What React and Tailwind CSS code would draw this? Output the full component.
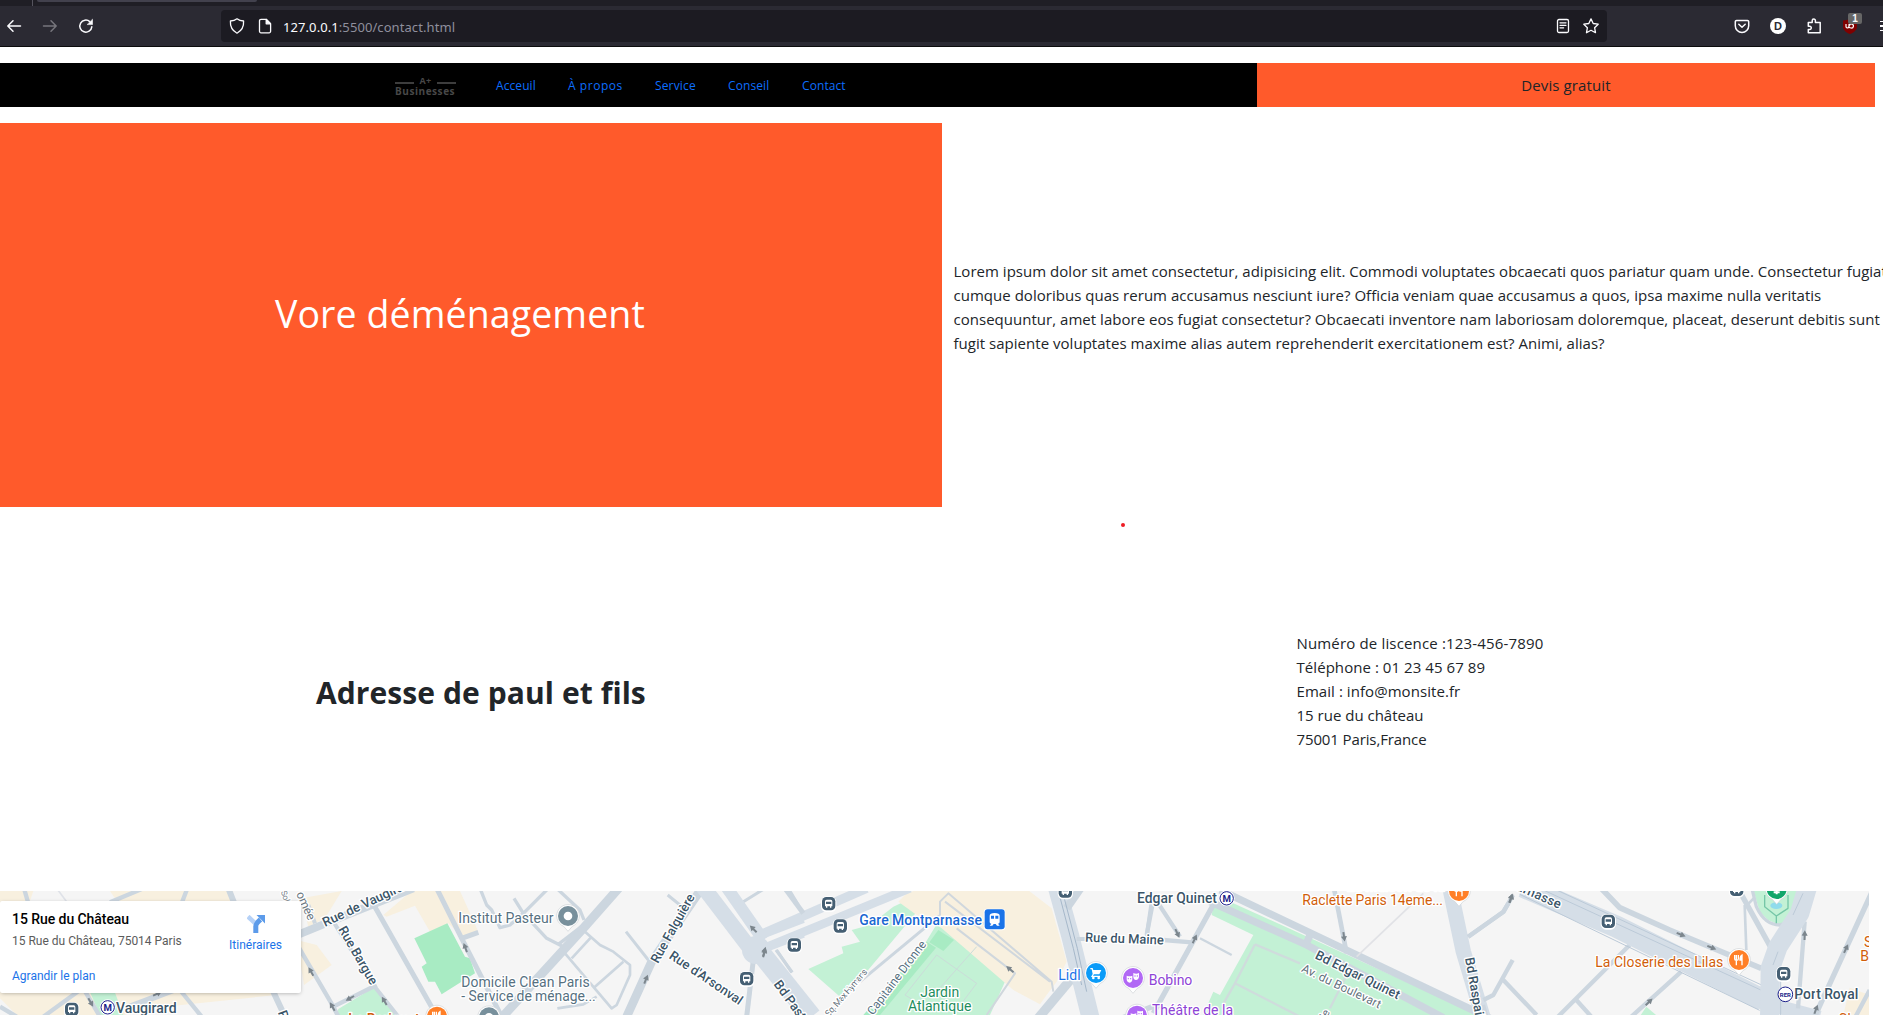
import React from "react";

const sans = "font-['Open_Sans','Noto_Sans',sans-serif]";

/* ---------- browser toolbar ---------- */

function Icon({ children, className = "" }) {
  return (
    <svg viewBox="0 0 16 16" className={`size-4 shrink-0 overflow-visible ${className}`} fill="none" stroke="currentColor" strokeWidth="1.3" strokeLinecap="round" strokeLinejoin="round">
      {children}
    </svg>
  );
}

function Toolbar() {
  return (
    <header className="h-[47px] border-b border-[#0c0c0d] bg-[#2b2a33] text-[#fbfbfe]">
      <div className="flex h-[6px] bg-[#1f1e25]">
        <div className="h-[6px] w-[33px] border-r border-[#55545e]" />
        <div className="ml-[4px] h-[2px] w-[220px] rounded-b bg-[#42414d]" />
      </div>
      <div className="flex h-10 items-center gap-5 pl-[6px]">
        <Icon><path strokeWidth="1.5" d="M14.5 8H1.8M7 2.8L1.8 8L7 13.2" /></Icon>
        <Icon className="text-[#77767d]"><path strokeWidth="1.5" d="M1.5 8h12.7M9 2.8L14.2 8L9 13.2" /></Icon>
        <Icon>
          <path strokeWidth="1.5" d="M13.8 8.8A6 6 0 1 1 11.8 3.6" />
          <path fill="currentColor" strokeWidth=".6" d="M14.5 1.6v5H9.5z" />
        </Icon>
        <div className="ml-[107px] flex h-8 w-[1386px] shrink-0 items-center rounded-[4px] bg-[#1c1b22] pl-2">
          <Icon><path d="M8 .8c2 1.6 4 2.1 6.6 2.2.3 4.8-1.6 9.5-6.6 12.2C3 12.5 1.1 7.8 1.4 3 4 2.9 6 2.4 8 .8z" /></Icon>
          <Icon className="ml-3">
            <path d="M4 1.300h5.200L13.600 5.700v7.600a1.500 1.500 0 0 1-1.500 1.500H4a1.500 1.500 0 0 1-1.500-1.500V2.800A1.500 1.500 0 0 1 4 1.300z" />
            <path fill="currentColor" d="M9.200 1.500v4.300h4.200z" />
          </Icon>
          <p className="ml-[10px] flex-1 whitespace-pre pt-[3px] font-['Noto_Sans',sans-serif] text-[13px] tracking-[0.08px] text-[#8f8f9d]">
            <span className="text-[#fbfbfe]">127.0.0.1</span>:5500/contact.html
          </p>
          <Icon>
            <rect x="2.500" y="1.500" width="11" height="13" rx="1.500" />
            <path d="M5 4.800h6M5 7.300h6M5 9.800h3.600" />
          </Icon>
          <Icon className="ml-3 mr-2"><path d="M8 .9l2.200 4.600 5 .7-3.600 3.500.9 5L8 12.300l-4.500 2.400.9-5L.8 6.200l5-.7z" /></Icon>
        </div>
        <Icon className="ml-[107px]">
          <path strokeWidth="1.500" d="M2.500 2.500h11a1.200 1.200 0 0 1 1.200 1.200v4A6.700 6.700 0 0 1 1.300 7.700v-4A1.200 1.200 0 0 1 2.500 2.500z" />
          <path strokeWidth="1.500" d="M4.800 6.200L8 9.200l3.200-3" />
        </Icon>
        <div className="flex size-4 shrink-0 items-center justify-center rounded-full bg-white font-['Liberation_Sans',sans-serif] text-[11px] font-bold leading-none text-[#2b2a33]">D</div>
        <Icon><path strokeWidth="1.500" d="M2.300 6.200V4.500h3.900V2.700a1.600 1.600 0 0 1 3.200 0v1.800h4.800v10.300H2.300v-3.200h1.400a1.500 1.500 0 0 0 1.500-1.700A1.500 1.500 0 0 0 3.700 8.200H2.300z" /></Icon>
        <div className="relative size-4 shrink-0">
          <svg viewBox="0 0 16 16" className="size-4">
            <path fill="#800000" d="M8 .5C10 2 12.500 2.300 15 2.500v6C15 12 12 14.500 8 16 4 14.500 1 12 1 8.500v-6C3.500 2.300 6 2 8 .5z" />
            <path fill="none" stroke="#fff" strokeWidth="1.200" d="M4 6v2.500q0 1.500 1.300 1.500T7 8.500V6M7 9q.8 1 2.200 1a2 2 0 1 0-1.700-2.500" />
          </svg>
          <span className="absolute -top-[5px] left-[6px] flex h-[11px] w-[14px] items-center justify-center rounded-[2px] bg-[#666] font-['Liberation_Sans',sans-serif] text-[10px] font-bold leading-none">1</span>
        </div>
        <div className="flex w-[5px] shrink-0 flex-col gap-[3px] pl-[2px]">
          <span className="h-[1.500px] bg-current" />
          <span className="h-[1.500px] bg-current" />
          <span className="h-[1.500px] bg-current" />
        </div>
      </div>
    </header>
  );
}

/* ---------- site navigation ---------- */

function Logo() {
  return (
    <div className="ml-[395px] w-[61px] pt-[2px] font-['Open_Sans',sans-serif] font-bold text-[#484848]">
      <div className="flex h-[8px] items-center justify-between">
        <span className="mt-[4px] h-[2px] w-[19px] bg-[#3d3d3d]" />
        <span className="text-[9px] leading-none tracking-[0.3px]">A+</span>
        <span className="mt-[4px] h-[2px] w-[19px] bg-[#3d3d3d]" />
      </div>
      <div className="mt-[1px] whitespace-nowrap text-[10px] leading-[10px] tracking-[0.55px]">Businesses</div>
    </div>
  );
}

function Nav() {
  return (
    <nav className="mt-4 flex h-11 w-[1875px]">
      <div className="flex w-[1257px] items-center bg-black">
        <Logo />
        <div className={`ml-10 flex gap-8 pt-px text-[12px] text-[#0d6efd] ${sans}`}>
          <a className="w-[40px] tracking-[0.08px]">Acceuil</a>
          <a className="w-[55px] whitespace-nowrap tracking-[0.55px]">À propos</a>
          <a className="w-[41px] tracking-[0.15px]">Service</a>
          <a className="w-[42px] tracking-[0.1px]">Conseil</a>
          <a className="w-[44px] tracking-[0.08px]">Contact</a>
        </div>
      </div>
      <div className="flex flex-1 items-center justify-center bg-[#ff5a2b] pt-px text-[15px] tracking-[0.12px] text-[#212529]">Devis gratuit</div>
    </nav>
  );
}

/* ---------- map ---------- */
/* The map is drawn in three units per pixel, in five adjoining sheets. */

const ROAD = "#ccd6df";
const MAJOR = "#d5dee7";

const Road = ({ d, w = 14, c = ROAD }) => <path d={d} fill="none" stroke={c} strokeWidth={w} strokeLinejoin="round" />;
const Area = ({ p, c }) => <polygon points={p} fill={c} />;
const Sheet = ({ x, children }) => <g transform={`translate(${x} 0)`}>{children}</g>;

const BEIGE = "#f8f0df";
const GREEN = "#c3f1d5";
const GREEN2 = "#a8ebc3";

function Label({ x, y, r = 0, s = 42, w = 400, c = "#56707f", len, anchor = "start", children }) {
  return (
    <text x={x} y={y} transform={`rotate(${r} ${x} ${y})`} fontSize={s} fontWeight={w} fill={c} stroke="#fff" strokeWidth="8" strokeLinejoin="round" paintOrder="stroke" textAnchor={anchor} textLength={len} fontFamily="Roboto, sans-serif">
      {children}
    </text>
  );
}

const Arrow = ({ x, y, r = 0 }) => (
  <g transform={`translate(${x} ${y}) rotate(${r})`} fill="#7c868d">
    <path d="M0 -15L9 1H3V14H-3V1H-9z" />
  </g>
);

const Bus = ({ x, y }) => (
  <g transform={`translate(${x} ${y})`}>
    <rect x="-23" y="-22" width="46" height="47" rx="16" fill="#fff" />
    <rect x="-20" y="-20" width="40" height="40" rx="13" fill="#455f73" />
    <path fill="#fff" fillRule="evenodd" d="M-11 -7Q-11 -12 -6 -12H6Q11 -12 11 -7V8H8V12H4V8H-4V12H-8V8H-11zM-8 -6V1H8V-6z" />
  </g>
);

const Pin = ({ x, y, c, children }) => (
  <g transform={`translate(${x} ${y})`}>
    <path d="M-13 31L0 46L13 31A34 34 0 1 0 -13 31z" fill="#fff" stroke="#cfd3d6" strokeWidth="2" />
    <circle r="30" fill={c} />
    {children}
  </g>
);

const Fork = () => (
  <g stroke="#fff" fill="none" strokeWidth="4">
    <path d="M-13 -15V-3Q-13 1 -8 1Q-2 1 -2 -3V-15M-8 -15V16" />
    <path fill="#fff" d="M9 16V-15Q3 -12 3 0H9" />
  </g>
);

const Masks = () => (
  <g fill="#fff">
    <path d="M-19 -7Q-11 -3 -2 -7V4Q-2 13 -10 14Q-19 13 -19 4z" />
    <path d="M1 -15Q10 -11 18 -15V-4Q17 5 9 6Q1 5 1 -4z" />
    <g fill="#b168f5"><circle cx="-14" cy="2" r="2" /><circle cx="-7" cy="2" r="2" /><circle cx="6" cy="-6" r="2" /><circle cx="13" cy="-6" r="2" /></g>
  </g>
);

const Metro = ({ x, y }) => (
  <g transform={`translate(${x} ${y})`}>
    <circle r="24" fill="#fff" />
    <circle r="20" fill="#fff" stroke="#1b1f8a" strokeWidth="3" />
    <text y="10" fontSize="29" fontWeight="700" fill="#1b1f8a" textAnchor="middle" fontFamily="Roboto, sans-serif">M</text>
  </g>
);

function MapCanvas() {
  const dark = "#3b5568";
  return (
    <svg viewBox="0 18 5607 372" className="block h-[124px] w-[1869px] bg-[#f5f5f5]">
      <Sheet x={0}>
        <Area c={BEIGE} p="0,18 700,18 690,60 0,60" />
        <Area c="#f5f5f5" p="100,18 330,18 350,48 90,48" />
        <Area c={BEIGE} p="0,300 850,300 830,330 400,375 375,390 50,390 0,340" />
        <Area c={BEIGE} p="905,40 1025,18 975,100 925,125" />
        <Area c={BEIGE} p="890,165 950,180 995,240 912,300" />
        <Area c={BEIGE} p="1150,90 1235,18 1380,18 1435,140 1390,160 1345,115 1290,140 1245,62 1160,95" />
        <Area c={GREEN} p="265,310 340,310 370,390 300,390" />
        <Area c={GREEN} p="1010,390 1015,372 1125,305 1160,345 1190,390" />
        <Area c={GREEN2} p="1243,160 1342,115 1395,215 1410,220 1425,265 1325,328 1305,290 1285,290 1265,245 1280,235" />
        <Road w={24} d="M880 155L970 118L1240 10" />
        <Road w={12} d="M925 60L945 115M1000 110L1120 300L1195 395" />
        <Road w={15} d="M1110 40L1300 375M1310 10L1385 160L1505 395M1385 160L1435 142" />
        <Road w={13} d="M895 185L1000 365L1015 395M1000 365L1130 300" />
        <Road w={18} d="M685 10L705 60M815 310L855 395M390 365L560 300" />
        <Road w={13} d="M330 52L430 10M545 55L562 10M72 10L85 55M130 395L240 315M540 315L605 395M250 310L300 395M0 365L50 395" />
        <Road w={5} c="#dfe2e8" d="M170 10L200 50" />
      </Sheet>
      <Sheet x={1200}>
        <Road w={27} d="M660 5L550 130L305 398" />
        <Road w={10} d="M240 10L260 60L275 75L300 128L330 120L370 85L445 10M342 40L370 85L440 160L490 185M470 10L540 75L552 105M475 178L550 120" />
        <Road w={8} d="M555 140L600 180L640 200L690 240V270L650 360L635 370L495 205M515 220L575 155M670 230L585 305M472 370L550 358L590 335" />
        <Road w={9} d="M678 140L745 225M803 30L840 60M1130 195L1175 262M1165 10L1195 60M1030 50L1095 10" />
        <Road w={26} d="M905 10L755 230L680 395" />
        <Road w={15} d="M1060 225L1040 395" />
        <Road w={46} c={MAJOR} d="M905 0L1050 190" />
        <Road w={36} c={MAJOR} d="M975 0L1090 165" />
        <Road w={24} c={MAJOR} d="M1085 150L1210 102M1095 190L1210 146" />
        <circle cx="1068" cy="195" r="42" fill={MAJOR} />
        <ellipse cx="1068" cy="194" rx="8" ry="7" fill="#f5f5f5" />
      </Sheet>
      <Sheet x={2280}>
        <Area c={GREEN} p="145,252 250,205 245,185 300,170 275,135 330,120 400,65 495,20 500,45 320,260 240,335" />
        <Area c={GREEN} p="530,118 765,262 735,290 690,390 330,390 480,200" />
        <Area c={GREEN2} p="535,135 582,165 550,198 508,172" />
        <Area c={GREEN2} p="500,170 528,188 360,390 310,390" />
        <Area c={BEIGE} p="415,50 440,25 480,12 800,12 875,70 920,230 890,290 860,330 840,358 760,315 545,130 500,100 470,90" />
        <Road w={28} c={MAJOR} d="M-10 154L320 10" />
        <Road w={26} c={MAJOR} d="M10 190L450 10" />
        <Road w={60} c={MAJOR} d="M-25 170L155 395" />
        <Road w={15} d="M75 10L130 85" />
        <Road w={9} d="M48 195L97 262M535 95L300 290" />
        <Road w={6} c="#d0d7dd" d="M590 130L765 265L680 390M500 120L540 90V50L565 25L875 290L880 320M555 50L870 290" />
        <Road w={3} c="#cbdcd9" d="M530 210L435 330L500 370M530 210L650 295L590 375M650 185L530 320" />
        <Road w={28} c={ROAD} d="M830 405L935 280" />
        <Road w={54} c={MAJOR} d="M890 5L930 150L992 400" />
        <Road w={24} d="M920 70L965 5" />
        <Road w={3} c="#a6b8ca" d="M893 10L940 190L965 300M905 10L952 190L980 320" />
        <Road w={12} d="M950 162H985M1175 50L1160 155" />
      </Sheet>
      <Sheet x={3360}>
        <Area c={GREEN} p="280,60 330,50 1100,400 245,400 280,320 300,330 400,150 275,90" />
        <Road w={22} d="M300 15L1110 400M270 50L560 180L970 398M570 150L555 185" />
        <Road w={16} d="M285 50L100 385M-10 405L110 360" />
        <Road w={13} d="M97 60L80 150M105 40L180 155M130 165L215 172" />
        <Road w={7} d="M240 160L335 210" />
        <Road w={14} d="M642 10L680 205" />
        <Road w={5} c="#e1e2e6" d="M710 215L910 25" />
        <Road w={7} c="#cfdcdc" d="M405 178L345 295L305 365M345 295L540 395M405 178L540 235M680 270L630 370" />
        <Road w={46} c={MAJOR} d="M990 10L1030 200L1090 400" />
        <Road w={13} d="M1045 155L1150 80L1165 55M1178 225L1120 330L1090 345M1145 280L1250 390" />
      </Sheet>
      <Sheet x={4449}>
        <Area c={GREEN} p="812,18 955,18 950,70 935,105 890,120 855,105 830,80" />
        <Area c={BEIGE} p="1100,308 1160,330 1160,395 1080,395" />
        <Area c={GREEN} p="470,395 490,365 525,395" />
        <Road w={13} d="M-45 155L62 80L90 30M440 180L225 395M595 260L445 395M280 345L325 395M0 360L10 395" />
        <Road w={66} c={MAJOR} d="M120 5L400 125L840 345" />
        <Road w={3} c="#bccad8" d="M170 10L840 318M210 10L840 302M110 28L830 376" />
        <Road w={17} d="M350 5L410 68L560 135L835 250" />
        <Road w={42} c={MAJOR} d="M830 350L1010 398" />
        <Road w={16} d="M765 10L865 190M1165 25L995 395" />
        <Road w={8} d="M785 60L790 195M788 65L812 40" />
        <Road w={13} d="M965 110L945 370M1160 315L1115 400" />
        <Road w={10} d="M808 15L820 65Q845 120 890 120Q920 115 945 80" />
        <Road w={4} c="#76c7a8" d="M845 30V65L880 93L915 70V30M880 90V115" />
        <Road w={58} c={MAJOR} d="M975 0L950 85L885 185L862 250L860 400" />
        <Road w={3} c="#bccad8" d="M960 25L930 90M885 200L870 240M893 260V390" />
      </Sheet>

      <Sheet x={0}>
        <Arrow x={272} y={352} r={150} /><Arrow x={472} y={326} r={65} />
        <Arrow x={933} y={260} r={-30} /><Arrow x={1050} y={340} r={240} /><Arrow x={997} y={365} r={-30} />
        <Arrow x={1153} y={348} r={-30} /><Arrow x={1396} y={188} r={-20} />
        <Bus x={215} y={373} /><Metro x={323} y={367} />
        <Label x={348} y={384} w={500} c={dark}>Vaugirard</Label>
        <Label x={975} y={126} r={-25} s={39} w={500} c={dark}>Rue de Vaugirard</Label>
        <Label x={1014} y={133} r={60} s={39} w={500} c={dark} len={196}>Rue Bargue</Label>
        <Label x={888} y={26} r={66} s={36} c="#6b7780">omée</Label>
        <Label x={842} y={20} r={70} s={25} c="#7a848b">Sol</Label>
        <Label x={833} y={382} r={70} s={39} w={500} c={dark}>Rue</Label>
        <Label x={1045} y={416} w={500} c="#d15e0a">Le Bariquet</Label>
        <Pin x={1311} y={395} c="#ff7f27"><Fork /></Pin>
      </Sheet>
      <Sheet x={1200}>
        <Arrow x={738} y={283} r={22} /><Arrow x={1060} y={132} r={-45} /><Arrow x={1093} y={200} r={15} />
        <Label x={175} y={115}>Institut Pasteur</Label>
        <Pin x={504} y={93} c="#78909c"><circle r="13" fill="#fff" /></Pin>
        <Label x={184} y={306} len={385}>Domicile Clean Paris</Label>
        <Label x={184} y={348} len={403}>- Service de ménage...</Label>
        <Pin x={267} y={397} c="#78909c"><circle r="13" fill="#fff" /></Pin>
        <Label x={774} y={237} r={-61} s={39} w={500} c={dark} len={230}>Rue Falguière</Label>
        <Label x={805} y={218} r={34} s={39} w={500} c={dark} len={256}>Rue d'Arsonval</Label>
        <Label x={1120} y={298} r={54} s={39} w={500} c={dark}>Bd Pasteur</Label>
        <Bus x={1040} y={281} /><Bus x={1183} y={180} />
      </Sheet>
      <Sheet x={2280}>
        <Bus x={206} y={56} /><Bus x={241} y={123} /><Bus x={916} y={18} />
        <Arrow x={13} y={203} r={15} /><Arrow x={750} y={253} r={-50} />
        <Label x={298} y={121} w={500} c="#1967d2" len={368}>Gare Montparnasse</Label>
        <rect x="671" y="71" width="65" height="65" rx="10" fill="#fff" />
        <rect x="674" y="73" width="60" height="60" rx="9" fill="#1a73e8" />
        <path fill="#fff" fillRule="evenodd" d="M689 92Q689 84 704 84Q719 84 719 92V111Q719 116 714 116L719 122H711L707 117H701L697 122H689L694 116Q689 116 689 111zM693 92V101H702V92zM706 92V101H715V92z" />
        <Label x={207} y={396} r={-49} s={27} c="#5f6d77" len={178}>Sq. Max Hymans</Label>
        <Label x={339} y={392} r={-53} s={36} c="#56707f" len={268}>Capitaine Dronne</Label>
        <Label x={539} y={336} anchor="middle" c="#1e8e5e">Jardin</Label>
        <Label x={539} y={378} anchor="middle" c="#1e8e5e">Atlantique</Label>
        <Label x={895} y={286} c="#1a73e8">Lidl</Label>
        <Pin x={1008} y={264} c="#0a9bf8">
          <path fill="#fff" d="M-17 -15H-10L-8 -9H16L10 4H-6L-9 8H12V12H-15L-10 3L-13 -11H-17z" /><circle cx="-8" cy="15" r="4" fill="#fff" /><circle cx="8" cy="15" r="4" fill="#fff" />
        </Pin>
        <Pin x={1119} y={279} c="#b168f5"><Masks /></Pin>
        <Label x={1166} y={300} c="#8e44d6">Bobino</Label>
        <Pin x={1131} y={392} c="#b168f5"><Masks /></Pin>
        <Label x={1176} y={391} c="#8e44d6" len={243}>Théâtre de la</Label>
        <Label x={975} y={170} r={2} s={39} w={500} c={dark} len={236}>Rue du Maine</Label>
      </Sheet>
      <Sheet x={3360}>
        <Arrow x={172} y={145} r={155} /><Arrow x={224} y={162} r={25} /><Arrow x={672} y={155} r={172} />
        <Label x={51} y={55} w={500} c={dark} len={240}>Edgar Quinet</Label>
        <Metro x={320} y={40} />
        <Label x={680} y={18} c="#d15e0a">La Maison de la</Label>
        <Label x={547} y={60} c="#d15e0a" len={422}>Raclette Paris 14eme...</Label>
        <Pin x={1017} y={18} c="#ff7f27"><Fork /></Pin>
        <Label x={583} y={219} r={26.5} s={39} w={500} c={dark} len={278}>Bd Edgar Quinet</Label>
        <Label x={542} y={259} r={25.5} s={36} c="#62717c" len={260}>Av. du Boulevart</Label>
        <Label x={1035} y={220} r={80} s={39} w={500} c={dark}>Bd Raspail</Label>
        <Label x={618} y={404} r={-60} s={33} c="#62717c">le</Label>
        <Arrow x={1173} y={40} r={25} />
      </Sheet>
      <Sheet x={4449}>
        <Arrow x={84} y={40} r={15} /><Arrow x={594} y={149} r={112} /><Arrow x={686} y={188} r={112} />
        <Arrow x={498} y={351} r={45} /><Arrow x={965} y={151} r={2} /><Arrow x={1089} y={191} r={25} /><Arrow x={999} y={373} r={20} />
        <Label x={98} y={14} r={24} s={39} w={500} c={dark} len={142}>arnasse</Label>
        <Bus x={376} y={109} /><Bus x={761} y={13} /><Bus x={902} y={266} />
        <ellipse cx="880" cy="62" rx="18" ry="10" fill="#90dcec" />
        <Pin x={881} y={12} c="#12a66a"><path stroke="#fff" strokeWidth="6" d="M-9 10H9M0 0V16" /></Pin>
        <Label x={337} y={246} c="#d15e0a" len={384}>La Closerie des Lilas</Label>
        <Pin x={768} y={225} c="#ff7f27"><Fork /></Pin>
        <circle cx="907" cy="328" r="22" fill="#fff" stroke="#1b1f8a" strokeWidth="3" />
        <text x="907" y="335" fontSize="18" fontWeight="700" fill="#1b1f8a" textAnchor="middle" fontFamily="Roboto, sans-serif">RER</text>
        <Label x={934} y={342} w={500} c={dark} len={192}>Port Royal</Label>
        <Label x={1143} y={186} c="#d15e0a">S</Label>
        <Label x={1132} y={228} c="#d15e0a">B</Label>
        <Label x={1066} y={416} c="#d15e0a">Ch</Label>
      </Sheet>
    </svg>
  );
}

function PlaceCard() {
  return (
    <div className="absolute left-0 top-[10px] flex h-[92px] w-[301px] justify-between rounded-[2px] bg-white pl-3 pr-[19px] font-['Roboto',sans-serif] text-[12px] shadow-[0_1px_4px_-1px_rgba(0,0,0,0.35)]">
      <div className="pt-[10px]">
        <h3 className="whitespace-nowrap text-[14px] font-medium leading-[16px] tracking-[-0.06px] text-black">15 Rue du Château</h3>
        <p className="mt-[6px] leading-[16px] text-[#5b5b5b]">15 Rue du Château, 75014 Paris</p>
        <a className="mt-[19px] block leading-[16px] text-[#1a73e8]">Agrandir le plan</a>
      </div>
      <div className="flex flex-col items-center pt-[14px]">
        <svg viewBox="0 0 18 18" className="size-[18px]">
          <path d="M1 1.500L8.500 8.500" stroke="#b5d1f7" strokeWidth="4.500" />
          <path d="M8.800 18V11Q8.800 8.500 13.500 4.500" fill="none" stroke="#5c9bea" strokeWidth="5" />
          <path d="M9.500 0H18V8.500z" fill="#5c9bea" />
        </svg>
        <a className="mt-[4px] leading-[16px] text-[#1a73e8]">Itinéraires</a>
      </div>
    </div>
  );
}

/* ---------- page ---------- */

const LOREM = [
  "Lorem ipsum dolor sit amet consectetur, adipisicing elit. Commodi voluptates obcaecati quos pariatur quam unde. Consectetur fugiat",
  "cumque doloribus quas rerum accusamus nesciunt iure? Officia veniam quae accusamus a quos, ipsa maxime nulla veritatis",
  "consequuntur, amet labore eos fugiat consectetur? Obcaecati inventore nam laboriosam doloremque, placeat, deserunt debitis sunt",
  "fugit sapiente voluptates maxime alias autem reprehenderit exercitationem est? Animi, alias?",
];

export default function App() {
  return (
    <div className={`h-[1015px] w-[1883px] overflow-hidden bg-white text-[#212529] ${sans}`}>
      <Toolbar />
      <Nav />
      <section className="mt-4 flex h-96">
        <div className="flex w-[942px] shrink-0 items-center bg-[#ff5a2b] pb-[3px] pl-[275px]">
          <h1 className="text-[37.5px] leading-[48px] tracking-[0.1px] text-white">Vore déménagement</h1>
        </div>
        <div className="flex flex-col justify-center pb-[16px] pl-[11.5px] text-[15px] leading-6 tracking-[0.025px]">
          {LOREM.map((line) => (
            <p key={line} className="whitespace-nowrap">{line}</p>
          ))}
        </div>
      </section>
      <section className="relative flex h-96 items-center">
        <span className="absolute left-[1121px] top-[16px] size-1 rounded-full bg-[#ee1c24]" />
        <h2 className="w-[1296.5px] pb-[12px] pl-[316px] text-[30px] font-bold leading-[40px] tracking-[0.08px]">Adresse de paul et fils</h2>
        <address className="pb-4 text-[15px] not-italic leading-6">
          <p className="tracking-[0.16px]">Numéro de liscence :123-456-7890</p>
          <p className="tracking-[0.06px]">Téléphone : 01 23 45 67 89</p>
          <p className="tracking-[0.06px]">Email : info@monsite.fr</p>
          <p>15 rue du château</p>
          <p className="tracking-[-0.12px]">75001 Paris,France</p>
        </address>
      </section>
      <section className="relative">
        <MapCanvas />
        <PlaceCard />
      </section>
    </div>
  );
}
